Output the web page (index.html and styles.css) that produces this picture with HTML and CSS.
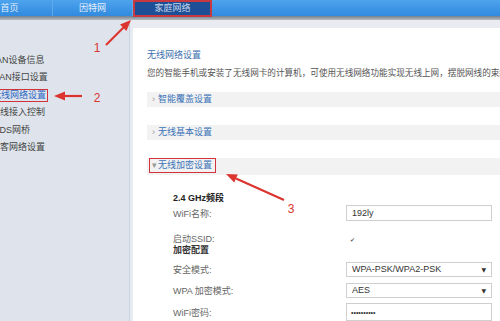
FILE: index.html
```html
<!DOCTYPE html>
<html lang="zh-CN">
<head>
    <meta charset="UTF-8">
    <title>家庭网络 - 无线网络设置</title>
    <link rel="stylesheet" href="styles.css">
</head>
<body>
    <div class="nav">
        <div class="tab first">首页</div>
        <div class="tab">因特网</div>
        <div class="tab active">家庭网络</div>
    </div>
    <div class="nav-shade"></div>

    <div class="layout">
        <ul class="side">
            <li>LAN设备信息</li>
            <li>WAN接口设置</li>
            <li><span class="current">无线网络设置</span></li>
            <li>无线接入控制</li>
            <li>WDS网桥</li>
            <li>访客网络设置</li>
        </ul>

        <div class="main">
            <div class="title">无线网络设置</div>
            <p class="desc">您的智能手机或安装了无线网卡的计算机，可使用无线网络功能实现无线上网，摆脱网线的束缚。</p>

            <div class="fold"><span class="caret">›</span>智能覆盖设置</div>
            <div class="fold"><span class="caret">›</span>无线基本设置</div>
            <div class="fold open"><span class="mark"><span class="caret">▾</span>无线加密设置</span></div>

            <div class="form">
                <div class="band">2.4 GHz频段</div>
                <div class="row r-name">
                    <label>WiFi名称:</label>
                    <input class="field" type="text" value="192ly">
                </div>
                <div class="row r-ssid">
                    <label>启动SSID:</label>
                    <span class="check">✔</span>
                </div>
                <div class="group">加密配置</div>
                <div class="row r-sel">
                    <label>安全模式:</label>
                    <div class="field select">WPA-PSK/WPA2-PSK<span class="drop">▼</span></div>
                </div>
                <div class="row r-sel">
                    <label>WPA 加密模式:</label>
                    <div class="field select">AES<span class="drop">▼</span></div>
                </div>
                <div class="row r-pwd">
                    <label>WiFi密码:</label>
                    <input class="field" type="text" value="••••••••••">
                </div>
            </div>
        </div>
    </div>

    <svg class="marks" width="500" height="321" viewBox="0 0 500 321">
        <line x1="106" y1="45" x2="124" y2="27" />
        <polygon points="131,20 126.4,31 120,24.6" />
        <text x="97" y="52">1</text>

        <line x1="82" y1="96" x2="64" y2="96" />
        <polygon points="54,96 65,91.5 65,100.5" />
        <text x="97" y="102">2</text>

        <line x1="284" y1="200" x2="236" y2="178.5" />
        <polygon points="226,174 237.8,174.4 234.2,182.6" />
        <text x="291" y="213">3</text>
    </svg>
</body>
</html>
```

FILE: styles.css
```css
body {
    margin: 0;
    width: 500px;
    height: 321px;
    overflow: hidden;
    position: relative;
    background: #ffffff;
    font-family: "Liberation Sans", "Noto Sans CJK SC", sans-serif;
    font-size: 9px;
}

/* top navigation */
.nav {
    height: 16px;
    display: flex;
    margin-left: -27px;
    background: linear-gradient(#4ea3ec, #318adf);
}

.tab {
    width: 79px;
    border-right: 1px solid #5ea9e8;
    color: #e3eefa;
    font-size: 9px;
    line-height: 16px;
    text-align: center;
}

.tab.first {
    text-indent: -6px;
}

.tab.active {
    height: 17px;
    box-sizing: border-box;
    background: #1d4f97;
    color: #c6d5ea;
    border: 2px solid #c8383f;
    line-height: 13px;
}

.nav-shade {
    height: 4px;
    background: linear-gradient(#6f7f8f, #b9bcc0);
}

/* page body */
.layout {
    display: flex;
    height: 301px;
}

.side {
    width: 129px;
    margin: 0;
    padding: 32px 0 0;
    list-style: none;
    background: #dfe4ec;
    border-right: 1px solid #cbd3de;
    overflow: hidden;
}

.side li {
    margin-left: -9px;
    line-height: 17.4px;
    color: #444;
    white-space: nowrap;
}

.side .current {
    display: inline-block;
    color: #2c68c2;
    line-height: 11px;
    padding-left: 9px;
    margin-left: -9px;
    padding-right: 1px;
    border: 1.5px solid #d0333a;
}

.main {
    flex: 1;
    min-width: 0;
    border-left: 3px solid #e6ebf2;
    border-top: 8px solid #e9ebf0;
    padding-left: 14px;
    white-space: nowrap;
    overflow: hidden;
}

.title {
    margin-top: 21px;
    line-height: 12px;
    color: #3d6fae;
}

.desc {
    margin: 6px 0 0;
    line-height: 12px;
    color: #555;
    font-size: 8.6px;
}

.fold {
    margin-top: 18px;
    height: 15px;
    line-height: 15px;
    padding-left: 5px;
    background: #f2f2f2;
    color: #3a72b8;
}

.desc + .fold {
    margin-top: 13px;
}

.fold .caret {
    color: #999;
    display: inline-block;
    width: 6px;
}

.fold.open {
    height: 17px;
    line-height: 13px;
}

.fold .mark {
    display: inline-block;
    margin-left: -3px;
    padding: 0 3px 0 2px;
    border: 1.5px solid #d0333a;
}

/* form */
.form {
    padding-left: 26px;
    color: #666;
}

.band {
    margin-top: 17px;
    line-height: 12px;
    font-weight: bold;
    color: #222;
}

.group {
    line-height: 12px;
    font-weight: bold;
    color: #333;
}

.row {
    display: flex;
    align-items: center;
}

.row label {
    width: 173px;
    flex: none;
}

.field {
    box-sizing: border-box;
    width: 146px;
    border: 1px solid #cfcfcf;
    background: #fff;
    font-family: "Liberation Sans", "Noto Sans CJK SC", sans-serif;
    font-size: 9px;
    color: #333;
    padding: 0 5px;
    margin: 0;
    outline: none;
}

.r-name { margin-top: 1px; height: 16px; }
.r-name .field { height: 16px; }

.r-ssid { margin-top: 11px; height: 12px; }

.check {
    margin-left: 4px;
    margin-top: 3px;
    font-family: "DejaVu Sans", sans-serif;
    font-size: 6px;
    color: #666;
}

.r-sel { margin-top: 6px; height: 15px; }

.select {
    height: 15px;
    line-height: 13px;
    display: flex;
    justify-content: space-between;
}

.drop {
    font-size: 6px;
    color: #333;
    font-family: "DejaVu Sans", sans-serif;
}

.r-pwd { margin-top: 5px; height: 18px; }
.r-pwd .field { height: 18px; font-size: 7px; padding-left: 4px; }

/* annotation overlay */
.marks {
    position: absolute;
    top: 0;
    left: 0;
    pointer-events: none;
}

.marks line {
    stroke: #dc3530;
    stroke-width: 2.2;
}

.marks polygon {
    fill: #dc3530;
}

.marks text {
    fill: #d9362f;
    font-family: "Liberation Sans", sans-serif;
    font-size: 12px;
    text-anchor: middle;
}
```
